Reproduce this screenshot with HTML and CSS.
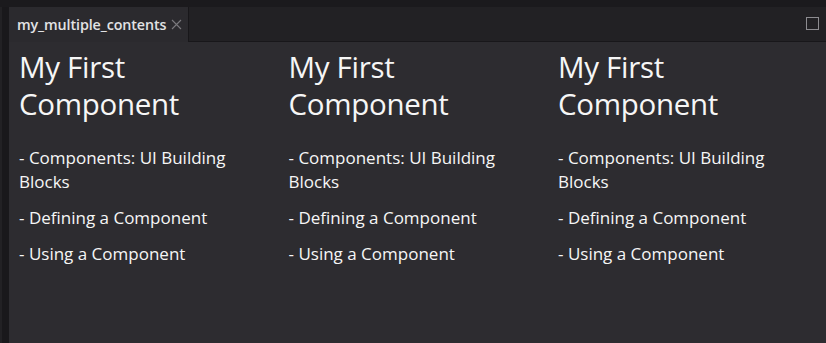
FILE: index.html
```html
<!DOCTYPE html>
<html>
<head>
<meta charset="utf-8">
<link rel="stylesheet" href="styles.css">
</head>
<body>
<div class="app">
  <div class="topstrip"></div>
  <div class="panel">
    <div class="gutter"><div class="gutter-edge"></div></div>
    <div class="main">
      <div class="tabbar">
        <div class="tab">
          <span class="tab-title">my_multiple_contents</span>
          <svg class="tab-close" width="11" height="11" viewBox="0 0 11 11"><path d="M1 1 L10 10 M10 1 L1 10" stroke="#7a797d" stroke-width="1.1" fill="none"/></svg>
        </div>
        <div class="tabbar-fill"></div>
        <svg class="maximize" width="13" height="13" viewBox="0 0 13 13"><rect x="0.5" y="0.5" width="12" height="12" fill="none" stroke="#8d8c90" stroke-width="1"/></svg>
      </div>
      <div class="content">
        <div class="col">
          <h1>My First Component</h1>
          <p>- Components: UI Building Blocks</p>
          <p>- Defining a Component</p>
          <p>- Using a Component</p>
        </div>
        <div class="col">
          <h1>My First Component</h1>
          <p>- Components: UI Building Blocks</p>
          <p>- Defining a Component</p>
          <p>- Using a Component</p>
        </div>
        <div class="col">
          <h1>My First Component</h1>
          <p>- Components: UI Building Blocks</p>
          <p>- Defining a Component</p>
          <p>- Using a Component</p>
        </div>
      </div>
    </div>
  </div>
</div>
</body>
</html>
```
FILE: styles.css
```css
html, body {
  margin: 0;
  padding: 0;
  background: #1b1a1d;
  font-family: "Open Sans", "Noto Sans", sans-serif;
  color: #f6f6f6;
}
.app {
  width: 826px;
  height: 343px;
  display: flex;
  flex-direction: column;
  overflow: hidden;
}
.topstrip {
  height: 7px;
  background: #1b1a1d;
  flex: none;
}
.panel {
  flex: 1;
  display: flex;
  min-height: 0;
}
.gutter {
  width: 9px;
  flex: none;
  background: #19181b;
  display: flex;
}
.gutter-edge {
  width: 2px;
  background: #222124;
}
.main {
  flex: 1;
  display: flex;
  flex-direction: column;
  background: #2d2c30;
}
.tabbar {
  flex: none;
  display: flex;
  align-items: stretch;
  background: #222124;
  border-bottom: 1px solid #18171a;
  box-sizing: border-box;
  height: 35px;
}
.tab {
  display: flex;
  align-items: center;
  gap: 5px;
  padding: 0 6px 0 8px;
  background: #2b2a2e;
  border-right: 1px solid #18171a;
  margin-bottom: -1px;
  width: 180px;
  box-sizing: border-box;
}
.tab-title {
  font-size: 14.3px;
  font-weight: 600;
  color: #e2e2e4;
  letter-spacing: -0.1px;
}
.tab-close {
  flex: none;
}
.tabbar-fill {
  flex: 1;
}
.maximize {
  align-self: center;
  margin-right: 9px;
  margin-top: -1px;
}
.content {
  flex: 1;
  display: grid;
  grid-template-columns: repeat(3, 269.5px);
  padding: 6px 0 0 10px;
}
.col {
  padding-right: 20px;
}
h1 {
  margin: 0 0 24px 0;
  font-size: 29.5px;
  font-weight: 400;
  line-height: 37px;
  letter-spacing: -0.3px;
}
p {
  margin: 0 0 12px 0;
  font-size: 17px;
  line-height: 24px;
}
```
